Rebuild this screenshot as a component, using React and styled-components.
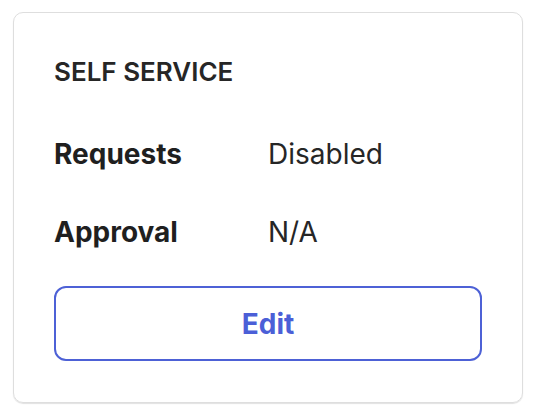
import React from "react";
import styled, { createGlobalStyle } from "styled-components";

const Global = createGlobalStyle`
  html, body { margin: 0; padding: 0; background: #ffffff; }
  body { font-family: Inter, "Noto Sans", sans-serif; -webkit-font-smoothing: antialiased; }
`;

const Page = styled.div`
  padding: 12px 13px;
`;

const Card = styled.section`
  box-sizing: border-box;
  width: 510px;
  height: 391px;
  border: 1px solid #dedede;
  border-radius: 10px;
  box-shadow: 0 1px 1px rgba(0, 0, 0, 0.12);
  padding: 43px 40px 40px 40px;
  display: flex;
  flex-direction: column;
`;

const Title = styled.h2`
  margin: 0 0 50px 0;
  font-size: 26px;
  line-height: 31px;
  font-weight: 600;
  color: #262626;
  text-transform: uppercase;
`;

const Rows = styled.dl`
  margin: 0;
  display: flex;
  flex-direction: column;
  gap: 44px;
`;

const Row = styled.div`
  display: grid;
  grid-template-columns: 214px 1fr;
  font-size: 28px;
  line-height: 34px;
`;

const Label = styled.dt`
  font-weight: 650;
  color: #1f1f1f;
`;

const Value = styled.dd`
  margin: 0;
  font-weight: 400;
  color: #262626;
`;

const EditButton = styled.button`
  margin-top: 37px;
  box-sizing: border-box;
  width: 100%;
  height: 75px;
  border: 2px solid #4d61d6;
  border-radius: 12px;
  background: #ffffff;
  color: #4b5fd7;
  font-family: Inter, "Noto Sans", sans-serif;
  font-size: 28px;
  font-weight: 650;
  cursor: pointer;
`;

export default function App() {
  return (
    <Page>
      <Global />
      <Card>
        <Title>Self Service</Title>
        <Rows>
          <Row>
            <Label>Requests</Label>
            <Value>Disabled</Value>
          </Row>
          <Row>
            <Label>Approval</Label>
            <Value>N/A</Value>
          </Row>
        </Rows>
        <EditButton>Edit</EditButton>
      </Card>
    </Page>
  );
}
